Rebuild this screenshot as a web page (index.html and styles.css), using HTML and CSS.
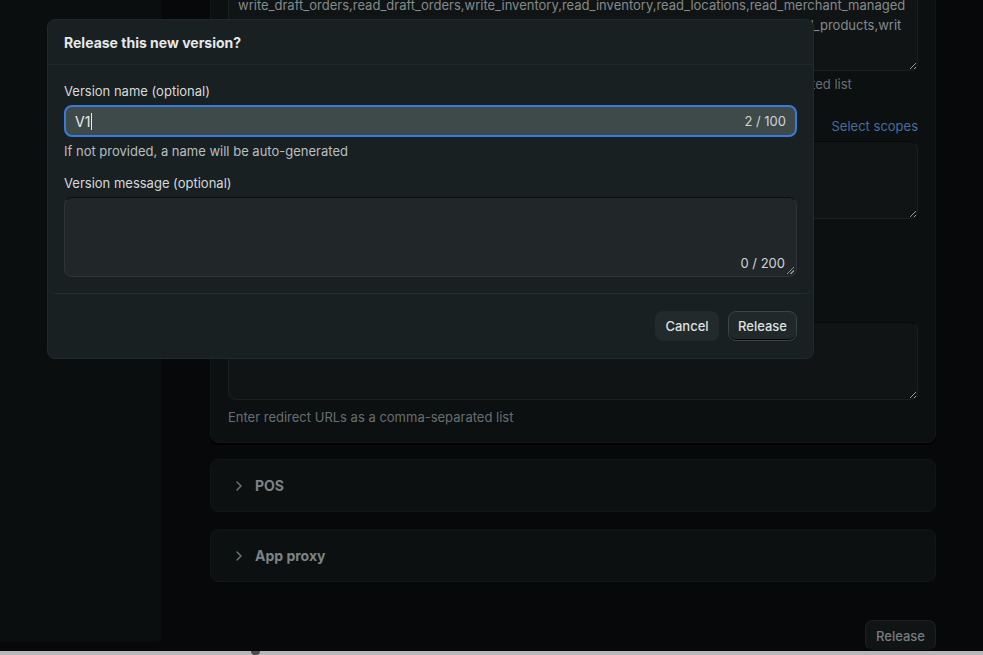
FILE: index.html
```html
<!DOCTYPE html>
<html>
<head>
  <link rel="stylesheet" href="styles.css">
</head>
<body>
  <div class="screen">
    <div class="page">
      <aside class="sidebar"></aside>

      <main class="main">
        <section class="card settings">
          <textarea class="field scopes" readonly>write_draft_orders,read_draft_orders,write_inventory,read_inventory,read_locations,read_merchant_managed
_fulfillment_orders,write_merchant_managed_fulfillment_orders,read_orders,write_orders,read_products,writ
e_products,read_orders</textarea>
          <p class="help first">Required access scopes are requested when your app installs. Enter these as a comma-separated list</p>

          <div class="label-row">
            <span class="label">Optional scopes</span>
            <a class="link">Select scopes</a>
          </div>
          <textarea class="field optional"></textarea>
          <p class="help">Enter optional scopes as a comma-separated list</p>

          <div class="label-row spaced">
            <span class="label">Allowed redirection URL(s)</span>
          </div>
          <textarea class="field redirects"></textarea>
          <p class="help last">Enter redirect URLs as a comma-separated list</p>
        </section>

        <section class="card collapsed">
          <svg class="chevron" viewBox="0 0 16 16"><path d="M6 4l4 4-4 4"/></svg>
          <span class="card-title">POS</span>
        </section>

        <section class="card collapsed">
          <svg class="chevron" viewBox="0 0 16 16"><path d="M6 4l4 4-4 4"/></svg>
          <span class="card-title">App proxy</span>
        </section>

        <div class="page-actions">
          <button class="btn-muted">Release</button>
        </div>
      </main>
    </div>
    <div class="scroll-strip"><span class="strip-thumb"></span></div>
  </div>

  <div class="modal">
    <div class="modal-header">Release this new version?</div>
    <div class="modal-body">
      <label class="form-label">Version name (optional)</label>
      <div class="text-input focused">
        <span class="value">V1<span class="caret"></span></span>
        <span class="counter">2 / 100</span>
      </div>
      <p class="form-help">If not provided, a name will be auto-generated</p>

      <label class="form-label">Version message (optional)</label>
      <div class="text-area">
        <span class="counter">0 / 200</span>
        <span class="grip"></span>
      </div>
    </div>
    <div class="modal-footer">
      <button class="btn-plain">Cancel</button>
      <button class="btn-secondary">Release</button>
    </div>
  </div>
</body>
</html>
```

FILE: styles.css
```css
* {
  margin: 0;
  padding: 0;
  box-sizing: border-box;
  font-family: Inter, 'Noto Sans', sans-serif;
}

:root {
  color-scheme: dark;
}

body {
  background: #060809;
  overflow: hidden;
}

.screen {
  height: 655px;
  display: flex;
  flex-direction: column;
}

.page {
  flex: 1;
  display: flex;
  align-items: flex-start;
  overflow: hidden;
}

.sidebar {
  width: 162px;
  height: 642px;
  background: #0b0e0f;
  border-radius: 0 0 6px 0;
  flex-shrink: 0;
}

.main {
  width: 726px;
  margin-left: 48px;
  display: flex;
  flex-direction: column;
}

.card {
  background: #0c1011;
  border: 1px solid #111718;
  border-radius: 8px;
}

.settings {
  margin-top: -33px;
  padding: 18px 17px 15px;
  box-shadow: 0 2px 0 #000;
}

.field {
  display: block;
  width: 100%;
  background: #101415;
  border: 1px solid #1a2022;
  border-top-color: #070909;
  border-radius: 8px;
  color: #848b8c;
  font-size: 13px;
  line-height: 20px;
  padding: 8px 9px;
  resize: vertical;
  outline: none;
  overflow: hidden;
  white-space: pre;
}

.scopes {
  height: 85px;
}

.optional,
.redirects {
  height: 78px;
}

.help {
  font-size: 13px;
  line-height: 20px;
  color: #686f71;
  margin-top: 5px;
  white-space: nowrap;
}

.help.first {
  margin-top: 3px;
}

.help.last {
  margin-top: 7px;
}

.label-row {
  display: flex;
  justify-content: space-between;
  align-items: center;
  margin-top: 22px;
  margin-bottom: 5px;
  height: 20px;
}

.label-row.spaced {
  margin-top: 35px;
  margin-bottom: 23px;
}

.label {
  font-size: 13px;
  color: #7f8687;
}

.link {
  font-size: 13px;
  color: #4a6d9c;
}

.collapsed {
  margin-top: 16px;
  height: 53px;
  display: flex;
  align-items: center;
  padding-left: 20px;
  gap: 8px;
}

.collapsed + .collapsed {
  margin-top: 17px;
}

.chevron {
  width: 16px;
  height: 16px;
  fill: none;
  stroke: #6d7476;
  stroke-width: 1.5;
  stroke-linecap: round;
  stroke-linejoin: round;
}

.card-title {
  font-size: 14px;
  font-weight: 700;
  color: #7c8385;
}

.page-actions {
  display: flex;
  justify-content: flex-end;
  margin-top: 38px;
}

.btn-muted {
  height: 31px;
  padding: 0 10px;
  background: #101415;
  border: 1px solid #1c2224;
  border-bottom-color: #050606;
  border-radius: 8px;
  color: #767d7f;
  font-size: 13px;
  font-weight: 500;
}

.scroll-strip {
  height: 4px;
  background: #b9b5b9;
  position: relative;
}

.strip-thumb {
  position: absolute;
  left: 251px;
  top: 0;
  width: 9px;
  height: 4px;
  background: #4b4a4d;
  border-radius: 0 0 5px 5px;
}

/* dialog */

.modal {
  position: fixed;
  left: 47px;
  top: 19px;
  width: 767px;
  height: 340px;
  background: #182022;
  border: 1px solid #1c2c2c;
  border-radius: 8px;
  color: #e2e5e5;
  display: flex;
  flex-direction: column;
}

.modal-header {
  height: 45px;
  display: flex;
  align-items: center;
  padding: 0 16px;
  font-size: 14px;
  font-weight: 700;
  color: #e6e8e8;
  border-bottom: 1px solid #1d2b2b;
}

.modal-body {
  padding: 16px;
  border-bottom: 1px solid #1f2e2e;
  border-radius: 0 0 8px 8px;
}

.form-label {
  display: block;
  font-size: 13px;
  line-height: 20px;
  color: #d6dadb;
  margin-bottom: 4px;
}

.text-input {
  height: 32px;
  display: flex;
  align-items: center;
  justify-content: space-between;
  padding: 0 9px;
  background: #3e494a;
  border: 2px solid #3a7bd8;
  border-radius: 8px;
}

.value {
  font-size: 14px;
  color: #e8eaea;
  display: flex;
  align-items: center;
}

.caret {
  width: 1px;
  height: 17px;
  background: #e8eaea;
  margin-left: 1px;
}

.counter {
  font-size: 13px;
  color: #d0d4d5;
}

.form-help {
  font-size: 13px;
  line-height: 20px;
  color: #b9bfc0;
  margin-top: 4px;
  margin-bottom: 12px;
}

.text-area {
  position: relative;
  height: 80px;
  background: #212729;
  border: 1px solid #2d3537;
  border-top-color: #0c0f10;
  border-radius: 8px;
  display: flex;
  align-items: flex-end;
  justify-content: flex-end;
  padding: 0 11px 5px;
}

.grip {
  position: absolute;
  right: 2px;
  bottom: 2px;
  width: 7px;
  height: 7px;
  background: linear-gradient(135deg, transparent 45%, #8a9092 45%, #8a9092 55%, transparent 55%, transparent 70%, #8a9092 70%, #8a9092 80%, transparent 80%);
}

.modal-footer {
  flex: 1;
  display: flex;
  justify-content: flex-end;
  align-items: center;
  gap: 9px;
  padding: 0 16px;
}

.btn-plain,
.btn-secondary {
  height: 30px;
  border-radius: 8px;
  font-size: 13px;
  font-weight: 500;
  color: #dde1e1;
}

.btn-plain {
  width: 64px;
  background: #222a2c;
  border: none;
}

.btn-secondary {
  width: 69px;
  background: #20282a;
  border: 1px solid #3a4446;
  box-shadow: inset 0 -1px 0 #050707;
}
```
